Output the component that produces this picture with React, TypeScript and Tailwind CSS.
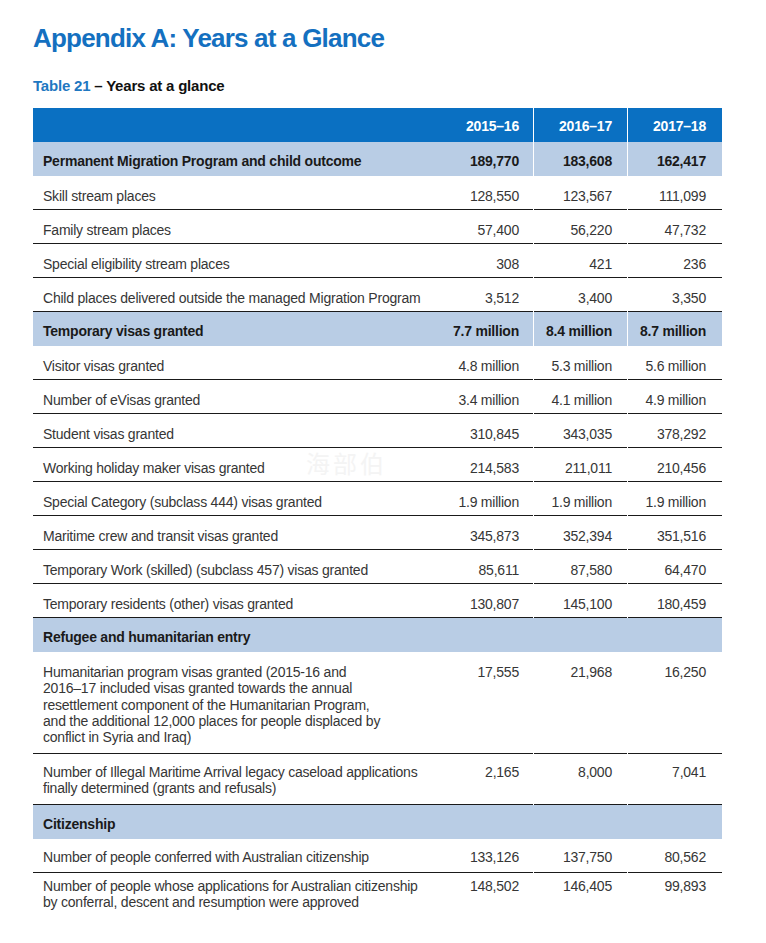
import React from "react";

type Row =
  | { kind: "section"; label: string; v?: [string, string, string] }
  | { kind: "row"; label: React.ReactNode; v: [string, string, string]; h?: string; pt?: string; noBorder?: boolean };

const rows: Row[] = [
  { kind: "section", label: "Permanent Migration Program and child outcome", v: ["189,770", "183,608", "162,417"] },
  { kind: "row", label: "Skill stream places", v: ["128,550", "123,567", "111,099"] },
  { kind: "row", label: "Family stream places", v: ["57,400", "56,220", "47,732"] },
  { kind: "row", label: "Special eligibility stream places", v: ["308", "421", "236"] },
  { kind: "row", label: "Child places delivered outside the managed Migration Program", v: ["3,512", "3,400", "3,350"] },
  { kind: "section", label: "Temporary visas granted", v: ["7.7 million", "8.4 million", "8.7 million"] },
  { kind: "row", label: "Visitor visas granted", v: ["4.8 million", "5.3 million", "5.6 million"] },
  { kind: "row", label: "Number of eVisas granted", v: ["3.4 million", "4.1 million", "4.9 million"] },
  { kind: "row", label: "Student visas granted", v: ["310,845", "343,035", "378,292"] },
  { kind: "row", label: "Working holiday maker visas granted", v: ["214,583", "211,011", "210,456"] },
  { kind: "row", label: "Special Category (subclass 444) visas granted", v: ["1.9 million", "1.9 million", "1.9 million"] },
  { kind: "row", label: "Maritime crew and transit visas granted", v: ["345,873", "352,394", "351,516"] },
  { kind: "row", label: "Temporary Work (skilled) (subclass 457) visas granted", v: ["85,611", "87,580", "64,470"] },
  { kind: "row", label: "Temporary residents (other) visas granted", v: ["130,807", "145,100", "180,459"] },
  { kind: "section", label: "Refugee and humanitarian entry" },
  {
    kind: "row",
    label: (
      <>
        Humanitarian program visas granted (2015-16 and
        <br />
        2016–17 included visas granted towards the annual
        <br />
        resettlement component of the Humanitarian Program,
        <br />
        and the additional 12,000 places for people displaced by
        <br />
        conflict in Syria and Iraq)
      </>
    ),
    v: ["17,555", "21,968", "16,250"],
    h: "h-[102px]",
    pt: "pt-[12px]",
  },
  {
    kind: "row",
    label: (
      <>
        Number of Illegal Maritime Arrival legacy caseload applications
        <br />
        finally determined (grants and refusals)
      </>
    ),
    v: ["2,165", "8,000", "7,041"],
    h: "h-[51px]",
    pt: "pt-[10px]",
  },
  { kind: "section", label: "Citizenship" },
  { kind: "row", label: "Number of people conferred with Australian citizenship", v: ["133,126", "137,750", "80,562"], pt: "pt-[3px]" },
  {
    kind: "row",
    label: (
      <>
        Number of people whose applications for Australian citizenship
        <br />
        by conferral, descent and resumption were approved
      </>
    ),
    v: ["148,502", "146,405", "99,893"],
    h: "h-[44px]",
    pt: "pt-[5px]",
    noBorder: true,
  },
];

function SectionRow({ label, v }: { label: string; v?: [string, string, string] }) {
  if (!v) {
    return (
      <div className="flex h-[34px] items-center bg-[#b9cde5] pl-[10px] pt-[5px] font-bold text-[#1a1a1a]">
        {label}
      </div>
    );
  }
  return (
    <div className="flex h-[34px] font-bold text-[#1a1a1a]">
      <div className="flex flex-1 items-center bg-[#b9cde5] pl-[10px] pt-[5px]">{label}</div>
      <div className="flex w-[94px] items-center justify-end bg-[#b9cde5] pr-[14px] pt-[5px]">{v[0]}</div>
      <div className="ml-px flex w-[93px] items-center justify-end bg-[#b9cde5] pr-[15px] pt-[5px]">{v[1]}</div>
      <div className="ml-px flex w-[94px] items-center justify-end bg-[#b9cde5] pr-[16px] pt-[5px]">{v[2]}</div>
    </div>
  );
}

function DataRow({
  label,
  v,
  h,
  pt,
  noBorder,
}: {
  label: React.ReactNode;
  v: [string, string, string];
  h?: string;
  pt?: string;
  noBorder?: boolean;
}) {
  const multi = !!h;
  const border = noBorder ? "" : "border-b border-[#1a1a1a]";
  const base = `${multi ? pt : `flex items-center ${pt ?? "pt-[8px]"}`} ${border}`;
  const num = multi ? "" : "justify-end";
  return (
    <div className={`flex ${h ?? "h-[34px]"} text-[#363636]`}>
      <div className={`flex-1 pl-[10px] ${base}`}>{label}</div>
      <div className={`w-[94px] pr-[14px] text-right ${base} ${num}`}>{v[0]}</div>
      <div className={`ml-px w-[93px] pr-[15px] text-right ${base} ${num}`}>{v[1]}</div>
      <div className={`ml-px w-[94px] pr-[16px] text-right ${base} ${num}`}>{v[2]}</div>
    </div>
  );
}

export default function App() {
  return (
    <div
      className="relative min-h-[943px] w-[766px] bg-white pl-[33px] pt-[21px]"
      style={{ fontFamily: '"Liberation Sans", Arial, sans-serif' }}
    >
      <h1 className="text-[26px] font-bold leading-[34px] tracking-[-0.8px] text-[#1470c0]">
        Appendix A: Years at a Glance
      </h1>
      <div className="mt-[22px] text-[15px] font-bold leading-[18px] tracking-[-0.2px] text-[#111]">
        <span className="text-[#1f78c1]">Table 21</span>
        <span> – Years at a glance</span>
      </div>
      <div className="mt-[13px] w-[689px] text-[14px] leading-[16.25px] tracking-[-0.22px]">
        <div className="flex h-[34px] font-bold text-white">
          <div className="flex-1 bg-[#0a70c2]" />
          <div className="flex w-[94px] items-center justify-end bg-[#0a70c2] pr-[14px] pt-[3px]">2015–16</div>
          <div className="ml-px flex w-[93px] items-center justify-end bg-[#0a70c2] pr-[15px] pt-[3px]">2016–17</div>
          <div className="ml-px flex w-[94px] items-center justify-end bg-[#0a70c2] pr-[16px] pt-[3px]">2017–18</div>
        </div>
        {rows.map((r, i) =>
          r.kind === "section" ? (
            <SectionRow key={i} label={r.label} v={r.v} />
          ) : (
            <DataRow key={i} label={r.label} v={r.v} h={r.h} pt={r.pt} noBorder={r.noBorder} />
          )
        )}
      </div>
      <div
        className="pointer-events-none absolute left-[306px] top-[450px] text-[24px] leading-[26px] tracking-[3px] text-[#f4f4f4]"
        style={{ fontFamily: '"Noto Sans CJK SC", sans-serif' }}
      >
        海部伯
      </div>
    </div>
  );
}
